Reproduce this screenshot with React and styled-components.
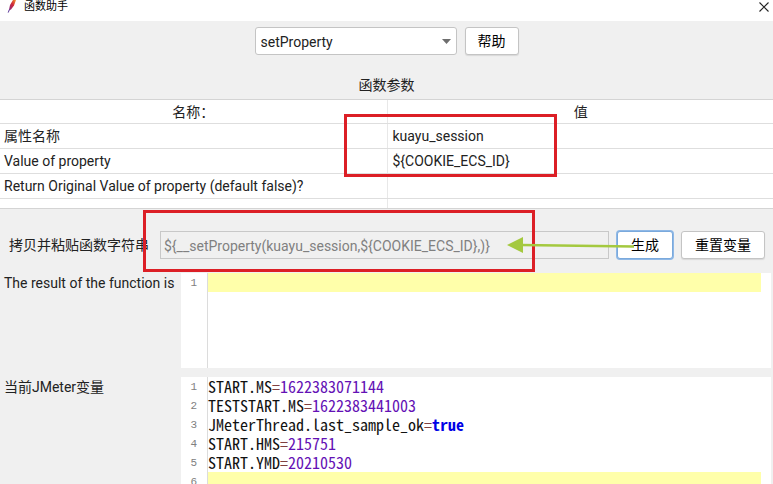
import React from "react";
import styled, { createGlobalStyle } from "styled-components";

const GlobalStyle = createGlobalStyle`
  *, *::before, *::after { box-sizing: border-box; }
  body {
    margin: 0;
    background: #f0f0f0;
    color: #222;
    font: 14px/20px Roboto, "Noto Sans CJK SC", sans-serif;
  }
  button, input, select, textarea { font: inherit; color: inherit; margin: 0; }
`;

const Window = styled.div`
  display: flex;
  flex-direction: column;
  height: 100vh;
  overflow: hidden;
`;

const TitleBar = styled.header`
  display: flex;
  align-items: center;
  flex: none;
  height: 21px;
  padding: 0 4px 7px 6px;
  background: #fff;
`;

const Feather = styled.svg`
  width: 12px;
  height: 14px;
  margin-right: 6px;
`;

const Title = styled.h1`
  flex: 1;
  margin: 0;
  font-size: 11px;
  font-weight: 400;
  line-height: 14px;
  color: #000;
`;

const CloseButton = styled.button`
  display: flex;
  padding: 0;
  border: 0;
  background: none;
`;

const Chooser = styled.div`
  display: flex;
  flex: none;
  justify-content: center;
  gap: 8px;
  padding: 6px 0 20px;
`;

const SelectBox = styled.div`
  position: relative;
  width: 202px;
`;

const Select = styled.select`
  appearance: none;
  width: 100%;
  height: 28px;
  padding: 2px 24px 0 5px;
  border: 1px solid #c4c4c4;
  border-radius: 3px;
  background: #fff;
`;

const SelectArrow = styled.svg`
  position: absolute;
  top: 12px;
  right: 6px;
  pointer-events: none;
`;

const Button = styled.button`
  height: 28px;
  padding: 0 ${(p) => (p.$roomy ? 13 : 12)}px;
  white-space: nowrap;
  color: #000;
  background: #fff;
  border: 1px solid ${(p) => (p.$focused ? "#7aa9dc" : "#c4c4c4")};
  border-radius: 3px;
  box-shadow: ${(p) => (p.$focused ? "0 0 0 1px #8fb8e6" : "0 1px 1px #d8d8d8")};
`;

const SectionTitle = styled.h2`
  flex: none;
  margin: 0;
  padding-bottom: 4px;
  font-size: 14px;
  font-weight: 400;
  line-height: 20px;
  text-align: center;
`;

const TablePanel = styled.section`
  position: relative;
  flex: none;
  padding-bottom: 9px;
  border: solid #d4d4d4;
  border-width: 1px 0;
  background: linear-gradient(#e8e8e8, #e8e8e8) calc(50% + 1px) 0 / 1px 100% no-repeat #fff;
`;

const Table = styled.table`
  width: 100%;
  table-layout: fixed;
  border-collapse: collapse;

  th, td {
    height: 25px;
    padding: 1px 4px 0;
    border-bottom: 1px solid #dedede;
    font-weight: 400;
    text-align: left;
  }
  th { height: 23px; text-align: center; }
  th + th, td + td { padding-left: 6px; }
`;

const RedFrame = styled.div`
  position: absolute;
  z-index: 1;
  left: ${(p) => p.$left}px;
  top: ${(p) => p.$top}px;
  width: ${(p) => p.$width}px;
  height: ${(p) => p.$height}px;
  border: 3px solid #dc1f26;
  pointer-events: none;
`;

const GenerateRow = styled.section`
  position: relative;
  display: flex;
  flex: none;
  align-items: center;
  gap: 8px;
  padding: 22px 8px 14px 9px;
`;

const FieldLabel = styled.label`
  white-space: nowrap;
`;

const ResultInput = styled.input`
  flex: 1;
  min-width: 0;
  height: 28px;
  margin-left: 3px;
  padding: 2px 3px 0;
  border: 1px solid #c8c8c8;
  background: #f0f0f0;
  color: #808080;
`;

const Arrow = styled.svg`
  position: absolute;
  z-index: 2;
  top: 27px;
  right: 138px;
  pointer-events: none;
`;

const EditorRow = styled.section`
  display: grid;
  grid-template-columns: 177px minmax(0, 1fr);
  flex: ${(p) => (p.$fill ? "1 0 0" : "none")};
  min-height: 0;
  height: ${(p) => (p.$fill ? "auto" : "104px")};
  padding: 0 2px ${(p) => (p.$fill ? 0 : 9)}px 4px;
`;

const Editor = styled.div`
  display: grid;
  grid-template-columns: 27px minmax(0, 1fr);
  min-height: 0;
  overflow: hidden;
  padding-right: 10px;
  background: #fff;
  font: 16px/19px "Noto Sans Mono CJK SC", "Liberation Mono", monospace;
`;

const Gutter = styled.div`
  padding: 1px 10px 0 0;
  border-right: 1px solid #dcdcdc;
  font: 11px/19px "Liberation Mono", monospace;
  text-align: right;
  color: #808080;

  span { display: block; }
`;

const CodeInput = styled.textarea`
  width: 100%;
  height: 100%;
  padding: 0;
  border: 0;
  outline: 0;
  resize: none;
  font: inherit;
  background: linear-gradient(#ffffaa, #ffffaa) 0 0 / 100% 19px no-repeat;
`;

const Code = styled.div`
  min-width: 0;
  white-space: pre;
  color: #111;
`;

const CodeLine = styled.div`
  height: 19px;
  background: ${(p) => (p.$current ? "#ffffaa" : "none")};
`;

const Operator = styled.span`
  color: #804040;
`;

const Value = styled.span`
  color: ${(p) => (p.$keyword ? "#0000e6" : "#6411b5")};
  font-weight: ${(p) => (p.$keyword ? 700 : 400)};
`;

const parameters = [
  ["属性名称", "kuayu_session"],
  ["Value of property", "${COOKIE_ECS_ID}"],
  ["Return Original Value of property (default false)?", ""],
];

const variables = [
  ["START.MS", "1622383071144"],
  ["TESTSTART.MS", "1622383441003"],
  ["JMeterThread.last_sample_ok", "true"],
  ["START.HMS", "215751"],
  ["START.YMD", "20210530"],
];

function LineNumbers({ count }) {
  return (
    <Gutter aria-hidden="true">
      {Array.from({ length: count }, (_, i) => (
        <span key={i}>{i + 1}</span>
      ))}
    </Gutter>
  );
}

export default function App() {
  return (
    <Window>
      <GlobalStyle />
      <TitleBar>
        <Feather viewBox="0 0 12 14" aria-hidden="true">
          <defs>
            <linearGradient id="plume" x1="1" y1="0" x2="0" y2="1">
              <stop offset="0" stopColor="#f39a2b" />
              <stop offset="0.45" stopColor="#d0283a" />
              <stop offset="1" stopColor="#7c2a8c" />
            </linearGradient>
          </defs>
          <path d="M10 0 L7 0 L4 5 L2.8 10.5 L5 9.5 L8 5.5 Z" fill="url(#plume)" />
          <path d="M3.4 9.5 L2.2 12.6" stroke="#5c3c9c" strokeWidth="1" />
        </Feather>
        <Title>函数助手</Title>
        <CloseButton aria-label="关闭">
          <svg width="10" height="10" viewBox="0 0 10 10">
            <path d="M0.5 0.5 L9.5 9.5 M9.5 0.5 L0.5 9.5" stroke="#222" strokeWidth="1.1" />
          </svg>
        </CloseButton>
      </TitleBar>

      <Chooser>
        <SelectBox>
          <Select aria-label="函数" defaultValue="setProperty">
            <option>setProperty</option>
          </Select>
          <SelectArrow width="9" height="5" viewBox="0 0 9 5" aria-hidden="true">
            <path d="M0 0 H9 L4.5 5 Z" fill="#6e6e6e" />
          </SelectArrow>
        </SelectBox>
        <Button>帮助</Button>
      </Chooser>

      <SectionTitle>函数参数</SectionTitle>
      <TablePanel>
        <Table>
          <thead>
            <tr>
              <th>名称：</th>
              <th>值</th>
            </tr>
          </thead>
          <tbody>
            {parameters.map(([name, value]) => (
              <tr key={name}>
                <td>{name}</td>
                <td>{value}</td>
              </tr>
            ))}
          </tbody>
        </Table>
        <RedFrame $left={344} $top={14} $width={213} $height={63} />
      </TablePanel>

      <GenerateRow>
        <FieldLabel htmlFor="call">拷贝并粘贴函数字符串</FieldLabel>
        <ResultInput id="call" readOnly value="${__setProperty(kuayu_session,${COOKIE_ECS_ID},)}" />
        <Button $roomy $focused>生成</Button>
        <Button $roomy>重置变量</Button>
        <RedFrame $left={143} $top={1} $width={392} $height={62} />
        <Arrow width="128" height="18" viewBox="0 0 128 18" aria-hidden="true">
          <path d="M14 9 L127 10.5" stroke="#a4c93f" strokeWidth="2.4" />
          <path d="M0 9 L16 1 V17 Z" fill="#a4c93f" />
        </Arrow>
      </GenerateRow>

      <EditorRow>
        <FieldLabel htmlFor="result">The result of the function is</FieldLabel>
        <Editor>
          <LineNumbers count={1} />
          <CodeInput id="result" />
        </Editor>
      </EditorRow>

      <EditorRow $fill>
        <FieldLabel as="span" id="vars">当前JMeter变量</FieldLabel>
        <Editor role="region" aria-labelledby="vars">
          <LineNumbers count={6} />
          <Code>
            {variables.map(([name, value]) => (
              <CodeLine key={name}>
                {name}
                <Operator>=</Operator>
                <Value $keyword={value === "true"}>{value}</Value>
              </CodeLine>
            ))}
            <CodeLine $current />
          </Code>
        </Editor>
      </EditorRow>
    </Window>
  );
}
